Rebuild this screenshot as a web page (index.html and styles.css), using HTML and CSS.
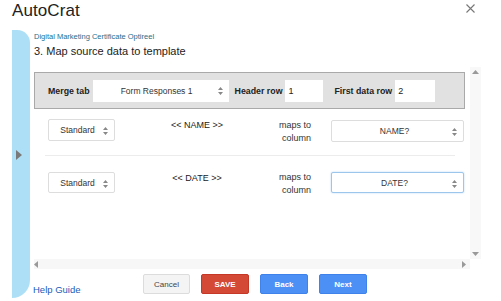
FILE: index.html
```html
<!DOCTYPE html>
<html>
<head>
<meta charset="utf-8">
<link rel="stylesheet" href="styles.css">
</head>
<body>
<div class="app">
  <header class="titlebar">
    <h1 class="title">AutoCrat</h1>
    <svg class="close" width="9" height="9" viewBox="0 0 9 9"><path d="M0.5 0.5L8.5 8.5M8.5 0.5L0.5 8.5" stroke="#777" stroke-width="1.1" fill="none"/></svg>
  </header>
  <div class="main">
    <aside class="sidebar">
      <svg class="side-arrow" width="6" height="10" viewBox="0 0 6 10"><path d="M0 0L6 5L0 10Z" fill="#7a7a7a"/></svg>
    </aside>
    <div class="content">
      <div class="doc-name">Digital Marketing Certificate Optireel</div>
      <div class="step">3. Map source data to template</div>
      <div class="scroll-frame">
        <div class="scroll-body">
          <div class="panel">
            <span class="plabel">Merge tab</span>
            <div class="select sel-tab">Form Responses 1<svg class="arrows" width="5" height="8" viewBox="0 0 5 8"><path d="M0 3L2.5 0L5 3Z M0 5L2.5 8L5 5Z" fill="#888"/></svg></div>
            <span class="plabel lbl-header">Header row</span>
            <div class="input in-header">1</div>
            <span class="plabel lbl-first">First data row</span>
            <div class="input in-first">2</div>
          </div>
          <div class="row row1">
            <div class="select sel-std">Standard<svg class="arrows" width="5" height="8" viewBox="0 0 5 8"><path d="M0 3L2.5 0L5 3Z M0 5L2.5 8L5 5Z" fill="#888"/></svg></div>
            <div class="token">&lt;&lt; NAME &gt;&gt;</div>
            <div class="maps">maps to<br>column</div>
            <div class="select sel-col">NAME?<svg class="arrows" width="5" height="8" viewBox="0 0 5 8"><path d="M0 3L2.5 0L5 3Z M0 5L2.5 8L5 5Z" fill="#888"/></svg></div>
          </div>
          <div class="row row2">
            <div class="select sel-std">Standard<svg class="arrows" width="5" height="8" viewBox="0 0 5 8"><path d="M0 3L2.5 0L5 3Z M0 5L2.5 8L5 5Z" fill="#888"/></svg></div>
            <div class="token">&lt;&lt; DATE &gt;&gt;</div>
            <div class="maps">maps to<br>column</div>
            <div class="select sel-col focus">DATE?<svg class="arrows" width="5" height="8" viewBox="0 0 5 8"><path d="M0 3L2.5 0L5 3Z M0 5L2.5 8L5 5Z" fill="#888"/></svg></div>
          </div>
        </div>
        <div class="vscroll">
          <svg width="7" height="4" viewBox="0 0 7 4"><path d="M0 4L3.5 0L7 4Z" fill="#999"/></svg>
          <svg width="7" height="4" viewBox="0 0 7 4"><path d="M0 0L3.5 4L7 0Z" fill="#999"/></svg>
        </div>
        <div class="hscroll">
          <svg width="4" height="7" viewBox="0 0 4 7"><path d="M4 0L0 3.5L4 7Z" fill="#999"/></svg>
          <svg width="4" height="7" viewBox="0 0 4 7"><path d="M0 0L4 3.5L0 7Z" fill="#999"/></svg>
        </div>
        <div class="corner"></div>
      </div>
      <footer class="footer">
        <a class="help">Help Guide</a>
        <div class="buttons">
          <button class="btn cancel">Cancel</button>
          <button class="btn save">SAVE</button>
          <button class="btn blue">Back</button>
          <button class="btn blue">Next</button>
        </div>
      </footer>
    </div>
  </div>
</div>
</body>
</html>
```
FILE: styles.css
```css
* { box-sizing: border-box; }
html, body { margin: 0; padding: 0; background: #fff; }
body {
  width: 501px; height: 301px; overflow: hidden;
  font-family: "Liberation Sans", Arial, sans-serif;
  color: #222;
}
.app { display: flex; flex-direction: column; height: 301px; }
.titlebar {
  height: 30px; display: flex; align-items: flex-start; justify-content: space-between;
  padding: 0 26px 0 12px;
}
.title {
  margin: 0; font-weight: normal; font-size: 17px; line-height: 21px;
  color: #222; letter-spacing: 0.1px;
}
.close { margin-top: 4px; }
.main { display: flex; height: 268px; }
.sidebar {
  width: 18px; margin-left: 12px; height: 268px;
  background: #ade0f6; border-radius: 0 14px 20px 0;
  display: flex; align-items: center; justify-content: center;
  padding-right: 4px; padding-top: 0;
}
.side-arrow { margin-top: -18px; }
.content { margin-left: 4px; width: 447px; display: flex; flex-direction: column; }
.doc-name { font-size: 7.5px; color: #1d6f8e; line-height: 10px; margin-top: 2px; }
.step { font-size: 11px; line-height: 14px; margin-top: 2px; color: #222; }
.scroll-frame {
  margin-top: 9px;
  display: grid; grid-template-columns: 436px 11px; grid-template-rows: 192px 10px;
}
.scroll-body { overflow: hidden; }
.vscroll {
  background: #f8f8f8; display: flex; flex-direction: column; justify-content: space-between; align-items: center;
  padding: 3px 0 3px;
}
.hscroll {
  background: #f7f7f7; display: flex; justify-content: space-between; align-items: center;
  padding: 0 4px 0 0;
}
.corner { background: #fff; }
.panel {
  margin-top: 5px; width: 431px; height: 37px;
  background: #e1e1e1; border: 1px solid #a9a9a9;
  display: flex; align-items: center; padding-left: 13px;
}
.plabel { font-size: 8.8px; font-weight: bold; color: #222; white-space: nowrap; }
.select {
  position: relative; background: #fff; height: 22px; display: flex; align-items: center; justify-content: center;
  font-size: 8.5px; color: #333; white-space: nowrap;
}
.select .arrows { position: absolute; right: 6px; top: 7px; }
.sel-tab { width: 136px; margin-left: 3px; padding-right: 8px; }
.lbl-header { margin-left: 6px; }
.input {
  background: #fff; height: 22px; font-size: 9px; display: flex; align-items: center; padding-left: 3px;
}
.in-header { width: 38px; margin-left: 3px; }
.lbl-first { margin-left: 11px; }
.in-first { width: 40px; margin-left: 3px; }
.row {
  display: grid; grid-template-columns: 67px 150px 46px 153px;
  margin-left: 11px; width: 410px; padding-left: 3px;
  align-items: start;
}
.row1 { padding-top: 10px; height: 47px; border-bottom: 1px solid #ececec; }
.row2 { padding-top: 16px; }
.sel-std { width: 67px; border: 1px solid #ddd; border-radius: 2px; padding-right: 8px; font-size: 8.5px; }
.token { font-size: 9px; text-align: center; padding-left: 14px; line-height: 13px; color: #222; }
.maps { font-size: 9px; line-height: 13px; text-align: right; color: #333; }
.sel-col { width: 133px; margin-left: 20px; border: 1px solid #ddd; border-radius: 2px; padding-right: 6px; }
.row1 .sel-col { margin-top: 1px; }
.row2 .sel-std, .row2 .sel-col { height: 21px; }
.row2 .maps { margin-top: -1px; }
.focus { border-color: #9cc6ec; box-shadow: 0 0 2px #b3d4f2; }
.footer { display: flex; align-items: flex-start; height: 30px; }
.help {
  width: 110px; font-size: 9.5px; color: #1a5bb8; margin-top: 15px; margin-left: -1px; cursor: pointer;
}
.buttons { display: flex; gap: 11px; margin-top: 5px; }
.btn {
  width: 48px; height: 20px; border-radius: 2px; font-family: "Liberation Sans", Arial, sans-serif;
  font-size: 8px; padding: 0; border: 1px solid transparent;
}
.cancel { background: #f4f4f4; border-color: #dcdcdc; color: #444; width: 47px; }
.save { background: #d44836; border-color: #c53727; color: #fff; font-weight: bold; }
.blue { background: #4c8ff5; border-color: #3f82ea; color: #fff; font-weight: bold; }
```
